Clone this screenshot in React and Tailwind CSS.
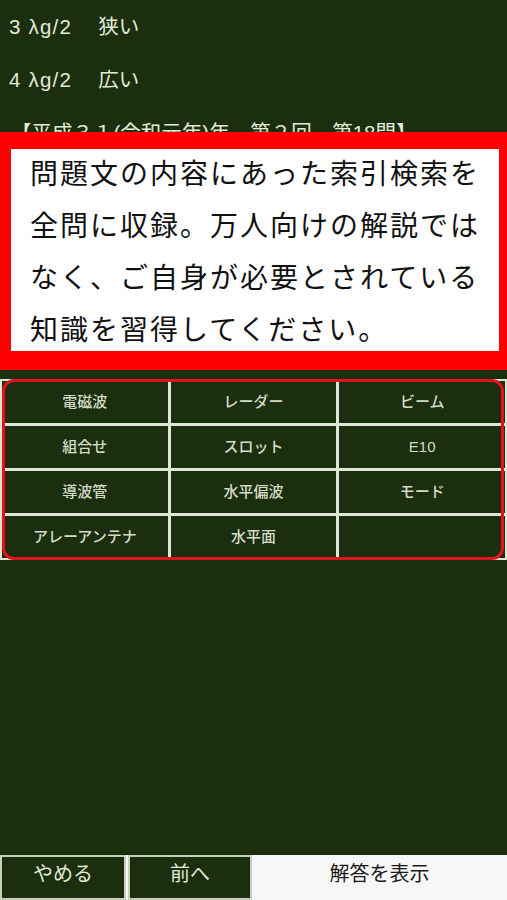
import React from "react";

const FONT = { fontFamily: '"Liberation Sans", "Noto Sans CJK JP", sans-serif' };

const cells = [
  "電磁波", "レーダー", "ビーム",
  "組合せ", "スロット", "E10",
  "導波管", "水平偏波", "モード",
  "アレーアンテナ", "水平面", "",
];

export default function App() {
  return (
    <div className="relative h-[900px] w-[507px] flex flex-col bg-[#1b2e0d] overflow-hidden" style={FONT}>
      <div className="flex-1 flex flex-col">
        <div className="flex flex-col px-[9px] text-[20.5px] text-[#e4ead9]">
          <div className="h-[53px] leading-[53px]"><span className="tracking-[1.2px]">3 λg/2</span>　 狭い</div>
          <div className="h-[53px] leading-[53px]"><span className="tracking-[1.2px]">4 λg/2</span>　 広い</div>
          <div className="h-[53px] leading-[53px] pl-[2px]">【平成３１(令和元年)年　第２回　第18問】</div>
        </div>
        <div className="relative mt-[220px]">
          <div className="grid grid-cols-3 gap-[3px] p-[2px] bg-[#dfe6d8]">
            {cells.map((c, i) => (
              <div
                key={i}
                className="h-[42px] bg-[#1b2e0d] flex items-center justify-center text-[15px] font-medium text-[#d3dbc8]"
              >
                {c}
              </div>
            ))}
          </div>
          <div className="absolute left-[2px] right-[3px] top-0 bottom-0 border-[3px] border-[#e3121c] rounded-[12px] pointer-events-none" />
        </div>
      </div>

      <div className="h-[45px] flex bg-[#f7f7f7]">
        <div className="w-[126px] border-2 border-[#c7cfc0] bg-[#1b2e0d] flex items-center justify-center pb-[8px] text-[20px] text-[#e1e8d6]">
          やめる
        </div>
        <div className="ml-[2px] w-[124px] border-2 border-[#c7cfc0] bg-[#1b2e0d] flex items-center justify-center pb-[8px] text-[20px] text-[#e1e8d6]">
          前へ
        </div>
        <div className="flex-1 flex items-center justify-center pb-[8px] text-[20px] text-[#1a1a1a]">
          解答を表示
        </div>
      </div>

      <div className="absolute left-0 top-[132px] w-full h-[238px] bg-[#ff0000] pl-[11px] pr-[8px] pt-[17px] pb-[19px]">
        <div className="h-full bg-white pl-[19px] text-[28px] tracking-[2px] leading-[52px] text-[#111111]">
          <div>問題文の内容にあった索引検索を</div>
          <div>全問に収録。万人向けの解説では</div>
          <div>なく、ご自身が必要とされている</div>
          <div>知識を習得してください。</div>
        </div>
      </div>
    </div>
  );
}
